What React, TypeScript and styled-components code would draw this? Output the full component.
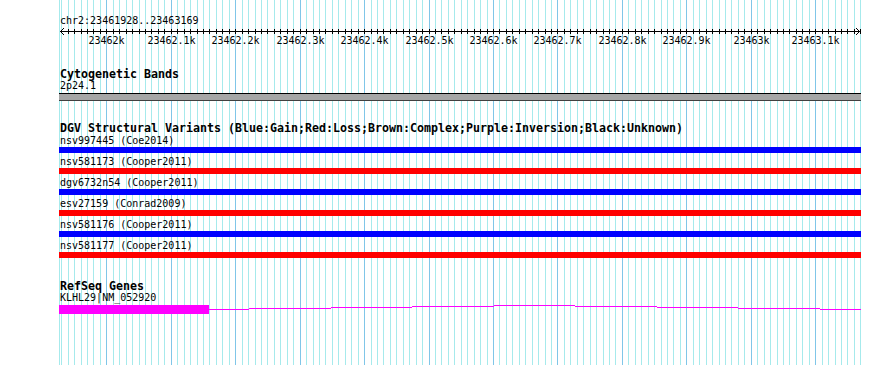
import React from "react";
import styled, { createGlobalStyle } from "styled-components";

const GlobalStyle = createGlobalStyle`
  html, body {
    margin: 0;
    padding: 0;
    background: #ffffff;
  }
  body {
    font-family: "DejaVu Sans Mono", "Liberation Mono", monospace;
    color: #000;
  }
`;

const PAGE_W = 890;
const PAGE_H = 365;
const TRACK_X = 59;
const TRACK_W = 802;
const MAJOR0 = 106.3;
const MINOR = 6.445;

const guides = (() => {
  const out: { x: number; major: boolean }[] = [{ x: TRACK_X, major: false }];
  for (let j = -7; j <= 117; j++) {
    out.push({ x: Math.round(MAJOR0 + MINOR * j), major: j % 10 === 0 });
  }
  return out;
})();

const tickLabels = [
  "23462k",
  "23462.1k",
  "23462.2k",
  "23462.3k",
  "23462.4k",
  "23462.5k",
  "23462.6k",
  "23462.7k",
  "23462.8k",
  "23462.9k",
  "23463k",
  "23463.1k",
];

const variants = [
  { name: "nsv997445 (Coe2014)", color: "#0000ff" },
  { name: "nsv581173 (Cooper2011)", color: "#ff0000" },
  { name: "dgv6732n54 (Cooper2011)", color: "#0000ff" },
  { name: "esv27159 (Conrad2009)", color: "#ff0000" },
  { name: "nsv581176 (Cooper2011)", color: "#0000ff" },
  { name: "nsv581177 (Cooper2011)", color: "#ff0000" },
];

// intron line of the gene, stepped like the browser draws it
const intron = [
  [209, 249, 4],
  [249, 331, 3],
  [331, 412, 2],
  [412, 494, 1],
  [494, 575, 0],
  [575, 657, 1],
  [657, 738, 2],
  [738, 820, 3],
  [820, 861, 4],
];

const Page = styled.div`
  position: relative;
  width: ${PAGE_W}px;
  height: ${PAGE_H}px;
  overflow: hidden;
  background: #ffffff;
`;

const Guides = styled.svg`
  position: absolute;
  left: 0;
  top: 0;
  z-index: 0;
`;

const Tracks = styled.div`
  position: relative;
  z-index: 1;
  display: flex;
  flex-direction: column;
  padding-left: ${TRACK_X}px;
  width: ${TRACK_W}px;
`;

const Ruler = styled.div`
  display: flex;
  flex-direction: column;
  margin-top: 15px;

  svg {
    display: block;
  }
`;

const Label = styled.div`
  font-size: 10px;
  line-height: 11px;
  height: 11px;
  padding-left: 1px;
  white-space: nowrap;
`;

const Track = styled.section<{ $top: number }>`
  display: flex;
  flex-direction: column;
  margin-top: ${(p) => p.$top}px;
`;

const TrackTitle = styled.div`
  font-size: 11.63px;
  font-weight: bold;
  line-height: 12px;
  height: 12px;
  padding-left: 1px;
  white-space: nowrap;
`;

const Band = styled.div`
  box-sizing: border-box;
  height: 8px;
  margin-top: 2px;
  background: #a6a6a6;
  border-top: 1px solid #000;
  border-bottom: 1px solid #404040;
`;

const Features = styled.div`
  display: flex;
  flex-direction: column;
  gap: 3px;
  margin-top: 1px;
`;

const Feature = styled.div`
  display: flex;
  flex-direction: column;
  gap: 1px;
`;

const Bar = styled.div<{ $color: string }>`
  height: 6px;
  background: ${(p) => p.$color};
`;

const GeneGlyph = styled.svg`
  display: block;
  margin-top: 2px;
`;

function RulerAxis() {
  const ticks = guides.filter((g) => g.x > 62);
  const majors = guides.filter((g) => g.major);
  return (
    <svg width={TRACK_W} height={20} shapeRendering="crispEdges">
      <rect x={1} y={5} width={TRACK_W - 1} height={1} fill="#000" />
      {ticks.map((t) => (
        <rect key={t.x} x={t.x - TRACK_X} y={3} width={1} height={5} fill="#000" />
      ))}
      <polyline points="5,2 1.5,5.5 5,9" fill="none" stroke="#000" strokeWidth={1} />
      <polyline points={`${TRACK_W - 5},2 ${TRACK_W - 1.5},5.5 ${TRACK_W - 5},9`} fill="none" stroke="#000" strokeWidth={1} />
      {majors.map((m, i) => (
        <text
          key={m.x}
          x={m.x - TRACK_X + 0.5}
          y={18}
          textAnchor="middle"
          fontFamily='"DejaVu Sans Mono", monospace'
          fontSize={10}
          fill="#000"
        >
          {tickLabels[i]}
        </text>
      ))}
    </svg>
  );
}

export default function App() {
  return (
    <Page>
      <GlobalStyle />
      <Guides width={PAGE_W} height={PAGE_H} shapeRendering="crispEdges">
        {guides.map((g) => (
          <rect
            key={g.x}
            x={g.x}
            y={0}
            width={1}
            height={PAGE_H}
            fill={g.major ? "#80c6e8" : "#a6eaec"}
          />
        ))}
      </Guides>
      <Tracks>
        <Ruler>
          <Label>chr2:23461928..23463169</Label>
          <RulerAxis />
        </Ruler>

        <Track $top={22}>
          <TrackTitle>Cytogenetic Bands</TrackTitle>
          <Label>2p24.1</Label>
          <Band />
        </Track>

        <Track $top={21}>
          <TrackTitle>
            DGV Structural Variants (Blue:Gain;Red:Loss;Brown:Complex;Purple:Inversion;Black:Unknown)
          </TrackTitle>
          <Features>
            {variants.map((v) => (
              <Feature key={v.name}>
                <Label>{v.name}</Label>
                <Bar $color={v.color} />
              </Feature>
            ))}
          </Features>
        </Track>

        <Track $top={22}>
          <TrackTitle>RefSeq Genes</TrackTitle>
          <Label>KLHL29|NM_052920</Label>
          <GeneGlyph width={TRACK_W} height={9} shapeRendering="crispEdges">
            <rect x={0} y={0} width={150} height={9} fill="#ff00ff" />
            {intron.map(([a, b, y]) => (
              <rect key={a} x={a - TRACK_X} y={y} width={b - a} height={1} fill="#ff00ff" />
            ))}
          </GeneGlyph>
        </Track>
      </Tracks>
    </Page>
  );
}
